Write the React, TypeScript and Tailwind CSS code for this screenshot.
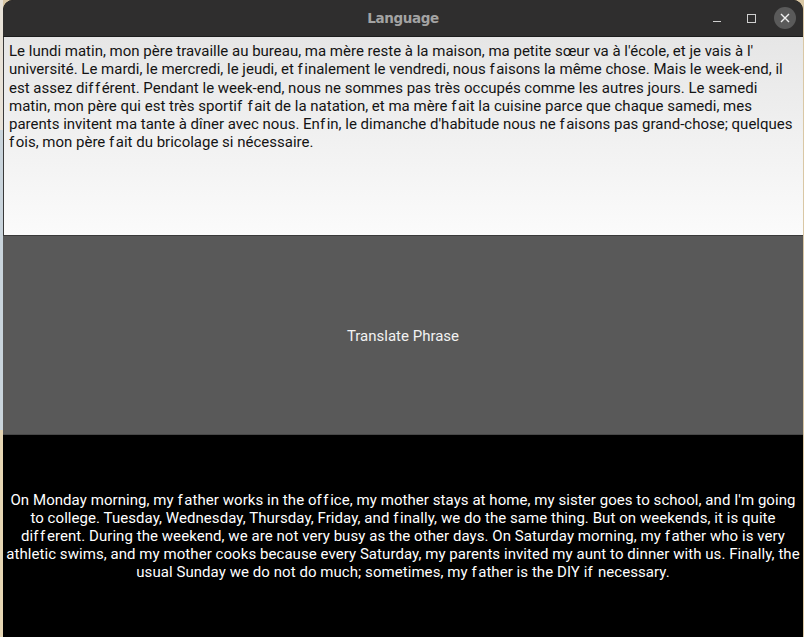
import { Fragment } from "react";

// the app's renderer gives "f" a wider advance than the browser does
function Line({ text }: { text: string }) {
  const parts = text.split("f");
  return (
    <div className="whitespace-nowrap">
      {parts.map((p, i) => (
        <Fragment key={i}>
          {p}
          {i < parts.length - 1 && <span className="mr-[1.5px]">f</span>}
        </Fragment>
      ))}
    </div>
  );
}

export default function App() {
  const fr = [
    "Le lundi matin, mon père travaille au bureau, ma mère reste à la maison, ma petite sœur va à l'école, et je vais à l'",
    "université. Le mardi, le mercredi, le jeudi, et finalement le vendredi, nous faisons la même chose. Mais le week-end, il",
    "est assez différent. Pendant le week-end, nous ne sommes pas très occupés comme les autres jours. Le samedi",
    "matin, mon père qui est très sportif fait de la natation, et ma mère fait la cuisine parce que chaque samedi, mes",
    "parents invitent ma tante à dîner avec nous. Enfin, le dimanche d'habitude nous ne faisons pas grand-chose; quelques",
    "fois, mon père fait du bricolage si nécessaire.",
  ];
  const en = [
    "On Monday morning, my father works in the office, my mother stays at home, my sister goes to school, and I'm going",
    "to college. Tuesday, Wednesday, Thursday, Friday, and finally, we do the same thing. But on weekends, it is quite",
    "different. During the weekend, we are not very busy as the other days. On Saturday morning, my father who is very",
    "athletic swims, and my mother cooks because every Saturday, my parents invited my aunt to dinner with us. Finally, the",
    "usual Sunday we do not do much; sometimes, my father is the DIY if necessary.",
  ];

  return (
    <div className="flex h-[637px] w-[804px] overflow-hidden bg-[#d9c7a4]">
      <div className="flex w-[3px] flex-col">
        <div className="h-[130px] bg-[#e8e2d8]" />
        <div className="h-[300px] bg-[#c9d4dc]" />
        <div className="flex-1 bg-[#e6d6b4]" />
      </div>
      <div className="flex w-[800px] flex-col overflow-hidden rounded-t-[10px] bg-black [font-variant-ligatures:none]">
        <div className="relative flex h-[36px] items-center justify-center bg-[#2f2e2e] pt-[1px]">
          <span className="font-['DejaVu_Sans',sans-serif] text-[13.5px] font-bold tracking-[-0.4px] text-[#a3a3a3]">
            Language
          </span>
          <div className="absolute right-[7px] top-[7px] flex items-center">
            <div className="flex h-[22px] w-[22px] items-end justify-center pb-[7px]">
              <div className="h-[1px] w-[8px] bg-[#cfcfcf]" />
            </div>
            <div className="ml-[12px] flex h-[22px] w-[22px] items-center justify-center">
              <div className="h-[9px] w-[9px] border border-[#cfcfcf]" />
            </div>
            <div className="ml-[12px] flex h-[22px] w-[22px] items-center justify-center rounded-full bg-[#5a5a5a]">
              <svg width="10" height="10" viewBox="0 0 10 10">
                <path d="M1 1L9 9M9 1L1 9" stroke="#f0f0f0" strokeWidth="1.4" />
              </svg>
            </div>
          </div>
        </div>
        <div className="h-[1px] bg-[#1c1c1c]" />
        <div className="h-[199px] border-b border-l border-[#3a3a3a] bg-gradient-to-b from-[#e6e6e6] to-[#fbfbfb] pl-[5px] pt-[5px] font-['Roboto',sans-serif] text-[15px] leading-[18.3px] text-[#141414]">
          {fr.map((l, i) => (
            <Line key={i} text={l} />
          ))}
        </div>
        <div className="flex h-[199px] items-center justify-center border-b border-[#474747] bg-[#595959] pt-[3px] font-['Roboto',sans-serif] text-[15px] text-[#f2f2f2]">
          Translate Phrase
        </div>
        <div className="flex flex-1 flex-col items-center pt-[56px] font-['Roboto',sans-serif] text-[15px] leading-[18px] tracking-[0.06px] text-white">
          {en.map((l, i) => (
            <Line key={i} text={l} />
          ))}
        </div>
      </div>
    </div>
  );
}
